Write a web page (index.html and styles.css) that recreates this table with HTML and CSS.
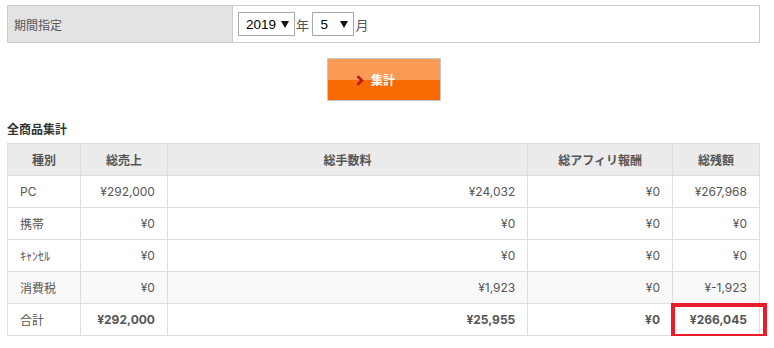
FILE: index.html
```html
<!DOCTYPE html>
<html lang="ja">
<head>
<meta charset="utf-8">
<title>全商品集計</title>
<link rel="stylesheet" href="styles.css">
</head>
<body>
<div class="page">
  <table class="period">
    <tr>
      <th class="period-label">期間指定</th>
      <td class="period-value">
        <span class="sel sel-year"><select><option>2019</option></select></span><span class="unit">年</span>
        <span class="sel sel-month"><select><option>5</option></select></span><span class="unit">月</span>
      </td>
    </tr>
  </table>

  <div class="actions">
    <button class="btn" type="button"><svg class="chev" width="8" height="11" viewBox="0 0 8 11"><path d="M1.5 1.2 L6 5.5 L1.5 9.8" fill="none" stroke="#b8192b" stroke-width="2.6"/></svg><span class="btn-text">集計</span></button>
  </div>

  <h2 class="title">全商品集計</h2>
  <table class="summary">
    <colgroup>
      <col class="c1"><col class="c2"><col class="c3"><col class="c4"><col class="c5">
    </colgroup>
    <thead>
      <tr><th>種別</th><th>総売上</th><th>総手数料</th><th>総アフィリ報酬</th><th>総残額</th></tr>
    </thead>
    <tbody>
      <tr><td class="name">PC</td><td>¥292,000</td><td>¥24,032</td><td>¥0</td><td>¥267,968</td></tr>
      <tr><td class="name">携帯</td><td>¥0</td><td>¥0</td><td>¥0</td><td>¥0</td></tr>
      <tr><td class="name">ｷｬﾝｾﾙ</td><td>¥0</td><td>¥0</td><td>¥0</td><td>¥0</td></tr>
      <tr class="shade"><td class="name">消費税</td><td>¥0</td><td>¥1,923</td><td>¥0</td><td>¥-1,923</td></tr>
      <tr class="total"><td class="name">合計</td><td>¥292,000</td><td>¥25,955</td><td>¥0</td><td class="mark">¥266,045</td></tr>
    </tbody>
  </table>
</div>
</body>
</html>
```

FILE: styles.css
```css
html, body {
  margin: 0;
  padding: 0;
  background: #fff;
}
body {
  font-family: "Inter", "Noto Sans CJK JP", sans-serif;
  font-size: 12px;
  color: #555;
}
.page {
  width: 753px;
  padding: 5px 0 0 7px;
}
table {
  border-collapse: collapse;
  width: 753px;
}
.period th, .period td {
  border: 1px solid #cccccc;
  height: 36px;
  padding: 0;
}
.period-label {
  width: 218px;
  background: #e3e3e3;
  text-align: left;
  font-weight: normal;
  padding-left: 6px !important;
  color: #555;
  font-family: "Noto Sans CJK JP", sans-serif;
}
.period-value {
  padding-left: 5px !important;
  background: #fff;
}
.sel {
  position: relative;
  display: inline-block;
  vertical-align: middle;
}
.sel select {
  -webkit-appearance: none;
  appearance: none;
  font-family: "Liberation Sans", Arial, sans-serif;
  font-size: 13.5px;
  color: #000;
  height: 24px;
  border: 1px solid #a9a9a9;
  border-radius: 0;
  background: #fff;
  padding: 0 0 0 7px;
  margin: 0;
  display: block;
}
.sel-year select { width: 57px; }
.sel-month select { width: 42px; padding-left: 7px; }
.sel::after {
  content: "";
  position: absolute;
  right: 6px;
  top: 9px;
  border-left: 4px solid transparent;
  border-right: 4px solid transparent;
  border-top: 7px solid #111;
  pointer-events: none;
}
.unit {
  display: inline-block;
  vertical-align: middle;
  font-size: 13px;
  color: #555;
  margin: 0 0 0 1px;
  font-family: "Noto Sans CJK JP", sans-serif;
}
.actions {
  display: flex;
  justify-content: center;
  padding-top: 15px;
}
.btn {
  width: 114px;
  height: 43px;
  border: 1px solid #c8c8c8;
  background: linear-gradient(to bottom, #f99a55 0, #f99a55 51%, #f76a00 51%, #f76a00 100%);
  display: flex;
  align-items: center;
  justify-content: center;
  padding: 0 16px 0 0;
  cursor: pointer;
  font-family: "Noto Sans CJK JP", sans-serif;
}
.chev {
  display: block;
  margin-right: 7px;
  margin-top: 2px;
}
.btn-text {
  color: #fff;
  font-weight: bold;
  font-size: 12px;
}
.title {
  margin: 19px 0 6px;
  font-size: 12px;
  font-weight: bold;
  color: #333;
  line-height: 17px;
  font-family: "Noto Sans CJK JP", sans-serif;
}
.summary .c1 { width: 73px; }
.summary .c2 { width: 87px; }
.summary .c3 { width: 361px; }
.summary .c4 { width: 145px; }
.summary .c5 { width: 87px; }
.summary th, .summary td {
  border: 1px solid #dddddd;
  height: 32px;
  padding: 0 12px;
  box-sizing: border-box;
}
.summary th {
  background: #ebebeb;
  font-weight: bold;
  text-align: center;
  color: #555;
}
.summary td {
  text-align: right;
}
.summary td.name {
  text-align: left;
}
.summary tr.shade td {
  background: #f9f9f9;
}
.summary tr.total td {
  font-weight: bold;
}
.summary tr.total td.name {
  font-weight: normal;
}
.summary td.mark {
  position: relative;
}
.summary td.mark::after {
  content: "";
  position: absolute;
  left: -2px;
  top: -1px;
  right: -8px;
  bottom: -3px;
  border: 4px solid #e81c2a;
  pointer-events: none;
}
```
